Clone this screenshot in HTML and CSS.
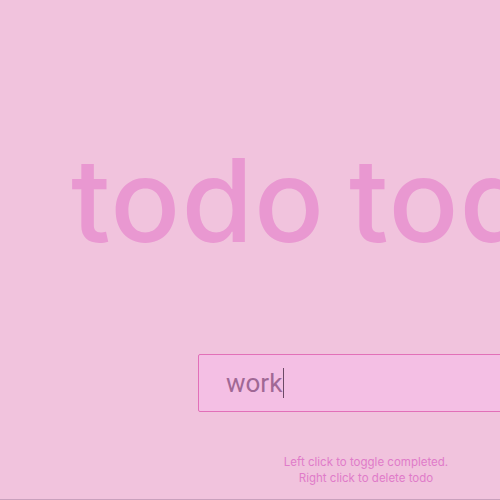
FILE: index.html
```html
<!DOCTYPE html>
<html>
<head>
<meta charset="utf-8">
<link rel="stylesheet" href="styles.css">
</head>
<body>
<main class="page">
  <h1 class="title">todo todo</h1>
  <div class="column">
    <div class="input-box"><span class="input-text">work</span><span class="caret"></span></div>
    <p class="hint">Left click to toggle completed.<br>Right click to delete todo</p>
  </div>
</main>
</body>
</html>
```
FILE: styles.css
```css
html, body {
  margin: 0;
  padding: 0;
  height: 100%;
  overflow: hidden;
}
body {
  background: #f1c3dd;
  font-family: "Inter", "Open Sans", sans-serif;
}
.page {
  height: 499px;
  border-bottom: 1px solid #c9a0bd;
  display: flex;
  flex-direction: column;
  overflow: hidden;
}
.title {
  margin: 0;
  padding: 130px 0 0 71px;
  font-size: 116px;
  font-weight: 500;
  line-height: 140px;
  color: #e998d1;
  white-space: nowrap;
  letter-spacing: 1px;
  word-spacing: -8px;
}
.column {
  margin: 84px 0 0 198px;
  width: 336px;
  display: flex;
  flex-direction: column;
}
.input-box {
  box-sizing: border-box;
  height: 58px;
  border: 1.5px solid #e270b8;
  border-radius: 2px;
  background: #f4bfe4;
  display: flex;
  align-items: center;
  padding-left: 27px;
}
.input-text {
  font-family: "Roboto", sans-serif;
  font-size: 26px;
  color: #a06895;
}
.caret {
  width: 1px;
  height: 30px;
  background: #6c4a66;
  margin-left: 1px;
}
.hint {
  margin: 42px 0 0 0;
  text-align: center;
  font-size: 11.5px;
  line-height: 16px;
  color: #e07bc9;
}
```
